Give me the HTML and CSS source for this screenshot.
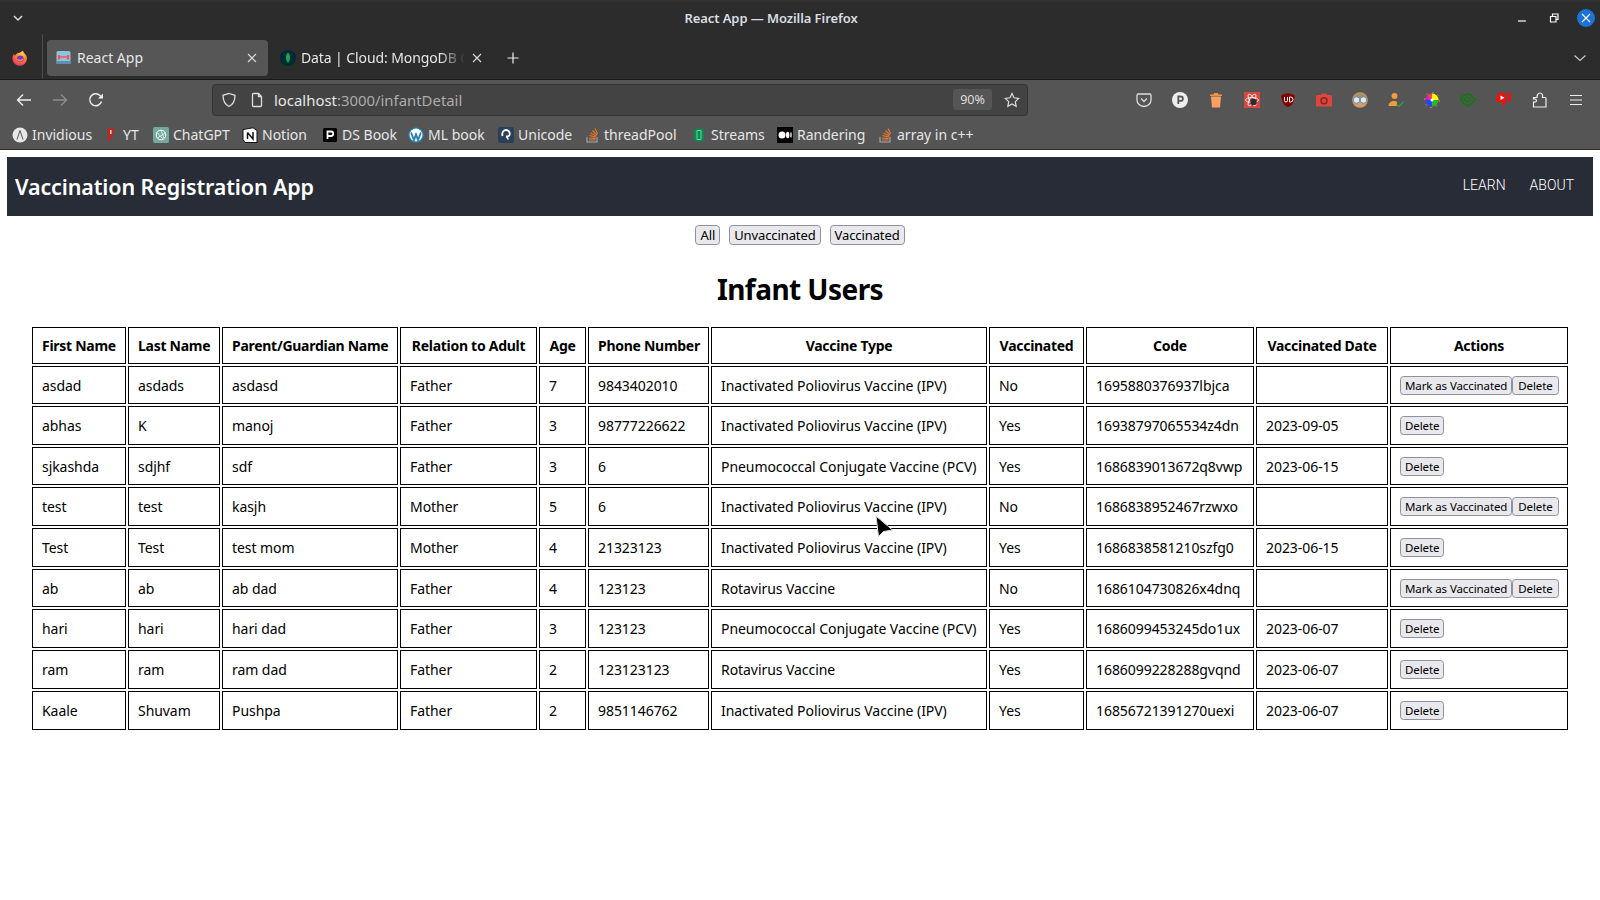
FILE: index.html
```html
<!DOCTYPE html>
<html lang="en">
<head>
<meta charset="utf-8">
<title>React App</title>
<link rel="stylesheet" href="styles.css">
</head>
<body>
<header class="browser">
  <div class="titlebar">
    <svg class="ic14 tb-chev" viewBox="0 0 14 14"><path d="M3 5l4 4 4-4" fill="none" stroke="#ddd" stroke-width="1.5"/></svg>
    <div class="wintitle">React App — Mozilla Firefox</div>
    <div class="winbtns">
      <svg class="ic14" viewBox="0 0 14 14"><path d="M3 10h8" stroke="#fff" stroke-width="1.2"/></svg>
      <svg class="ic14" viewBox="0 0 14 14"><path d="M3.5 5.5h5.5v5.5h-5.500zM5.500 5.500v-2.500h5.500v5.500h-2" fill="none" stroke="#fff" stroke-width="1.200"/></svg>
      <span class="closebtn"><svg class="ic14" viewBox="0 0 14 14"><path d="M3 3l8 8M11 3l-8 8" stroke="#fff" stroke-width="1.100"/></svg></span>
    </div>
  </div>
  <div class="tabbar">
    <div class="ffslot">
      <svg class="ic16" viewBox="0 0 16 16"><defs><radialGradient id="ffg" cx=".65" cy=".2" r=".95"><stop offset="0" stop-color="#ffd43a"/><stop offset=".5" stop-color="#ff7139"/><stop offset="1" stop-color="#e3246e"/></radialGradient></defs><path d="M10.500.5c1 1.300 1.500 2 1.800 2.800 1.500 1 2.700 3 2.700 5.200a7.300 7.300 0 0 1-14.600 0c0-2 .8-3.600 1.800-4.800 0 1 .3 1.500.8 2 .6-2.200 3-2.500 4.500-3 1.500-.5 2.500-1.200 3-2.200z" fill="url(#ffg)"/><circle cx="8.300" cy="8.700" r="3.300" fill="#6a3cc8"/><path d="M5 8.500c1 1 2.500 1.500 4 1 1-.3 2-.8 2.500-1.800 0 2-1.500 3.800-3.300 3.800S5 10.300 5 8.500z" fill="#ff8a3c"/></svg>
    </div>
    <div class="tab tab-active">
      <svg class="ic15" viewBox="0 0 15 15"><rect x=".5" y="1" width="14" height="13" rx="1.500" fill="#8fc4dd"/><rect x=".5" y="11" width="14" height="3" fill="#5e8fb0"/><path d="M3 5v4.500M12 5v4.500" stroke="#f4545c" stroke-width="2.200"/><path d="M3 7h9" stroke="#f4545c" stroke-width="1.500"/></svg>
      <span class="tabtext">React App</span>
      <svg class="ic14 tabx" viewBox="0 0 14 14"><path d="M3 3l8 8M11 3l-8 8" stroke="#ddd" stroke-width="1.100"/></svg>
    </div>
    <div class="tab tab-other">
      <svg class="ic16" viewBox="0 0 16 16"><circle cx="8" cy="8" r="8" fill="#002a36"/><path d="M8 2.500c2.500 2.500 3 6.500 0 10.500c-3-4-2.500-8 0-10.500z" fill="#13aa52"/></svg>
      <span class="tabtext tabfade">Data | Cloud: MongoDB C</span>
      <svg class="ic14 tabx" viewBox="0 0 14 14"><path d="M3 3l8 8M11 3l-8 8" stroke="#ddd" stroke-width="1.100"/></svg>
    </div>
    <svg class="ic14 newtab" viewBox="0 0 14 14"><path d="M7 1.500v11M1.500 7h11" stroke="#eee" stroke-width="1.200"/></svg>
    <svg class="ic14 tabs-chev" viewBox="0 0 14 14"><path d="M1.500 4.500l5.500 5 5.500-5" fill="none" stroke="#ccc" stroke-width="1.200"/></svg>
  </div>
  <div class="navbar-b">
    <div class="navbtns">
      <svg class="ic16" viewBox="0 0 16 16"><path d="M15 8H1.500M7 2.500L1.500 8 7 13.500" fill="none" stroke="#eee" stroke-width="1.300"/></svg>
      <svg class="ic16" viewBox="0 0 16 16"><path d="M1 8h13.500M9 2.500L14.500 8 9 13.500" fill="none" stroke="#8e8e8e" stroke-width="1.300"/></svg>
      <svg class="ic16" viewBox="0 0 16 16"><path d="M13.500 9.500A6 6 0 1 1 12 3.500L14.500 6" fill="none" stroke="#eee" stroke-width="1.400"/><path d="M15 1.500V6.500H10z" fill="#eee"/></svg>
    </div>
    <div class="urlbar">
      <svg class="ic16" viewBox="0 0 16 16"><path d="M8 1.500l6 1.800c0 5-1.500 9-6 11.200C3.500 12.300 2 8.300 2 3.300z" fill="none" stroke="#ddd" stroke-width="1.300"/></svg>
      <svg class="ic16 docicon" viewBox="0 0 16 16"><path d="M3.500 2.500a1 1 0 0 1 1-1h5l3 3v9a1 1 0 0 1-1 1h-7a1 1 0 0 1-1-1zM9.500 1.500v3h3" fill="none" stroke="#ddd" stroke-width="1.300"/></svg>
      <span class="urltext"><span class="urlhost">localhost</span>:3000/infantDetail</span>
      <span class="zoompill">90%</span>
      <svg class="ic16 staricon" viewBox="0 0 16 16"><path d="M8 1.500l2 4.300 4.700.6-3.400 3.200.9 4.700L8 12l-4.200 2.300.9-4.700L1.300 6.400 6 5.800z" fill="none" stroke="#ddd" stroke-width="1.200"/></svg>
    </div>
    <div class="exts">
      <svg class="ic16" viewBox="0 0 16 16"><path d="M2.500 2h11a1.500 1.500 0 0 1 1.500 1.500V8A7 6.500 0 0 1 1 8V3.500A1.500 1.500 0 0 1 2.500 2z" fill="none" stroke="#ddd" stroke-width="1.300"/><path d="M5 6.500l3 3 3-3" fill="none" stroke="#ddd" stroke-width="1.300"/></svg>
      <svg class="ic16" viewBox="0 0 16 16"><circle cx="8" cy="8" r="8" fill="#eee"/><path d="M6.300 12V4.500h2.400a2.200 2.200 0 0 1 0 4.400H6.300" fill="none" stroke="#555" stroke-width="1.800"/></svg>
      <svg class="ic16" viewBox="0 0 16 16"><path d="M6 1h4l.5 1.500H14V4H2V2.500h3.500z" fill="#f58d4c"/><path d="M3 4.500h10L12 15.500H4z" fill="#ff9e5e"/></svg>
      <svg class="ic16" viewBox="0 0 16 16"><rect width="16" height="16" fill="#d7473d"/><ellipse cx="8" cy="8" rx="6.500" ry="2.500" fill="none" stroke="#fff" stroke-width=".8" transform="rotate(60 8 8)"/><ellipse cx="8" cy="8" rx="6.500" ry="2.500" fill="none" stroke="#fff" stroke-width=".8" transform="rotate(-60 8 8)"/><ellipse cx="8" cy="8" rx="6.500" ry="2.500" fill="none" stroke="#fff" stroke-width=".8"/><circle cx="9.500" cy="10" r="3.200" fill="#2b2b2b"/></svg>
      <svg class="ic16" viewBox="0 0 16 16"><path d="M8 .8l7 2c0 6-1.500 10.500-7 12.700C2.500 13.300 1 8.800 1 2.800z" fill="#800000" stroke="#666" stroke-width=".5"/><path d="M4.500 5v3.500a1.500 1.500 0 0 0 3 0V5M9.500 5v5h1a2.500 2.500 0 0 0 0-5z" fill="none" stroke="#fff" stroke-width="1"/></svg>
      <svg class="ic16" viewBox="0 0 16 16"><path d="M1.500 3H5l1-1.500h4L11 3h3.500A1.500 1.500 0 0 1 16 4.500v10H0v-10A1.500 1.500 0 0 1 1.500 3z" fill="#e0443a"/><circle cx="8" cy="8.800" r="3" fill="none" stroke="#7c2a24" stroke-width="1.500"/></svg>
      <svg class="ic16" viewBox="0 0 16 16"><circle cx="8" cy="8" r="7.800" fill="#d59a72"/><path d="M.8 6.500A7.500 7.500 0 0 1 15.200 6.500z" fill="#a8906a"/><circle cx="4.500" cy="8" r="3.200" fill="#d8eef2" stroke="#5f7f90" stroke-width=".8"/><circle cx="11.500" cy="8" r="3.200" fill="#d8eef2" stroke="#5f7f90" stroke-width=".8"/></svg>
      <svg class="ic16" viewBox="0 0 16 16"><circle cx="6.500" cy="4" r="3" fill="#f79a3a"/><path d="M.500 14c0-3 2.500-5 5.500-5 1.500 0 2.500.5 3 1v4z" fill="#f79a3a"/><path d="M8.500 12l2.500 2.500 4.500-5" fill="none" stroke="#2e9b57" stroke-width="1.200"/></svg>
      <svg class="ic16" viewBox="0 0 16 16"><circle cx="8" cy="8" r="7.700" fill="none" stroke="#999" stroke-dasharray="2 4" stroke-width=".8"/><circle cx="8" cy="8" r="6.500" fill="#f44"/><path d="M8 8V1.500A6.500 6.500 0 0 1 14.500 8z" fill="#ff0"/><path d="M8 8h6.500A6.500 6.500 0 0 1 8 14.500z" fill="#2b2"/><path d="M8 8v6.500A6.500 6.500 0 0 1 1.500 8z" fill="#24f"/><path d="M8 8H1.500A6.500 6.500 0 0 1 3.400 3.400z" fill="#c2c"/><circle cx="8" cy="8" r="1.500" fill="#fff"/></svg>
      <svg class="ic16" viewBox="0 0 16 16"><path d="M.5 7C2.500 3 7 1 10 3c2.500 1.500 4 3.500 5.500 4.500L8.500 14C6 13.500 2.500 11 .5 7z" fill="none" stroke="#0b7d0b" stroke-width="1.500"/><path d="M4 7c2-2.500 5-2 6.500.5L8 10C6.500 9.500 5 8.500 4 7z" fill="none" stroke="#0b7d0b" stroke-width="1.500"/></svg>
      <svg class="ic16" viewBox="0 0 16 16"><path d="M2 1h8.500v8.500L7 15l-1-5H0v-3z" fill="#f01010"/><rect x="12" y="1" width="3" height="8" fill="#f01010"/><path d="M4.500 3.500l4 2.300-4 2.300z" fill="#fff"/></svg>
      <svg class="ic16" viewBox="0 0 16 16"><path d="M1.500 15V10c2 .5 3-.5 3-1.500S3 6.500 1.500 7V5.500H5C5 3 6 1 8 1s3 2 2.500 4.500H13a1 1 0 0 1 1 1V15z" fill="none" stroke="#eee" stroke-width="1.200"/></svg>
      <svg class="ic16" viewBox="0 0 16 16"><path d="M2 3.500h12M2 8h12M2 12.500h12" stroke="#eee" stroke-width="1.200"/></svg>
    </div>
  </div>
  <nav class="bookmarks">
    <a class="bm bm1"><svg class="ic16" viewBox="0 0 16 16"><circle cx="8" cy="8" r="7.500" fill="#e8e8e8"/><path d="M5 12.500L8 3.500l3 9" fill="none" stroke="#555" stroke-width="1"/></svg>Invidious</a>
    <a class="bm bm2"><svg class="ic16" viewBox="0 0 16 16"><path d="M5 1h6l-1.500 9H7.500L7 14H5z" fill="#c6241b"/><path d="M7 3v4h1.500V3z" fill="#f2d6d0"/></svg>YT</a>
    <a class="bm bm3"><svg class="ic16" viewBox="0 0 16 16"><rect width="16" height="16" rx="2" fill="#74aa9c"/><circle cx="8" cy="8" r="4.800" fill="none" stroke="#fff" stroke-width="1"/><path d="M8 3.200L11 11M12.500 6L5 10.500M4 5.500L10 12" stroke="#fff" stroke-width=".7"/></svg>ChatGPT</a>
    <a class="bm bm4"><svg class="ic16" viewBox="0 0 16 16"><path d="M1 2.500L11 .8 15 3.500V15.500H3L1 12.500z" fill="#fff" stroke="#111" stroke-width="1"/><path d="M5.500 12V5.500M5.500 5.500L11 12V5" fill="none" stroke="#111" stroke-width="1.500"/></svg>Notion</a>
    <a class="bm bm5"><svg class="ic16" viewBox="0 0 16 16"><rect x="1" y="1" width="14" height="14" rx="1.500" fill="#000"/><path d="M5.500 12V4.500H9a2 2 0 0 1 0 4.500H5.500" fill="none" stroke="#fff" stroke-width="1.800"/></svg>DS Book</a>
    <a class="bm bm6"><svg class="ic16" viewBox="0 0 16 16"><circle cx="8" cy="8" r="7.700" fill="#1d7cb3"/><circle cx="8" cy="8" r="6.500" fill="#fff"/><path d="M3 5.500L6 13 8 7.500 10 13l3-7.500" fill="none" stroke="#1d7cb3" stroke-width="1.800"/></svg>ML book</a>
    <a class="bm bm7"><svg class="ic16" viewBox="0 0 16 16"><rect width="16" height="16" rx="2" fill="#2a4058"/><path d="M4.500 9c-1-4 1.500-6 3.500-6s4.500 2 3.500 5c-.5 1.200-2 1.500-3.500 1.500M8 9.500c1.500.5 2 1.500 2 3" fill="none" stroke="#fff" stroke-width="1.800"/></svg>Unicode</a>
    <a class="bm bm8"><svg class="ic16" viewBox="0 0 16 16"><path d="M3 10v5h10v-5" fill="none" stroke="#aaa" stroke-width="1.100"/><path d="M5 13h6.500M5 11l6.500.6M5.500 8.500l6.300 1.700M6.500 6l5.800 3M8.500 3.500l4.500 4.500M11 1.500l2.700 5.300" stroke="#e8762c" stroke-width="1.200"/></svg>threadPool</a>
    <a class="bm bm9"><svg class="ic16" viewBox="0 0 16 16"><path d="M8 .5l5 2.500v10l-5 2.500-5-2.500V3z" fill="#0c8a52"/><path d="M6 3.500h4v9H6z" fill="none" stroke="#6fd19c" stroke-width="1"/></svg>Streams</a>
    <a class="bm bm10"><svg class="ic16" viewBox="0 0 16 16"><rect width="16" height="16" fill="#000"/><circle cx="5" cy="8" r="3.500" fill="#fff"/><ellipse cx="10.700" cy="8" rx="1.700" ry="3.300" fill="#fff"/><ellipse cx="14" cy="8" rx=".7" ry="3" fill="#fff"/></svg>Randering</a>
    <a class="bm bm11"><svg class="ic16" viewBox="0 0 16 16"><path d="M3 10v5h10v-5" fill="none" stroke="#aaa" stroke-width="1.100"/><path d="M5 13h6.500M5 11l6.500.6M5.500 8.500l6.300 1.700M6.500 6l5.800 3M8.500 3.500l4.500 4.500M11 1.500l2.700 5.300" stroke="#e8762c" stroke-width="1.200"/></svg>array in c++</a>
  </nav>
</header>
<main class="page">
  <div class="appbar">
    <div class="brand">Vaccination Registration App</div>
    <div class="applinks"><a>LEARN</a><a>ABOUT</a></div>
  </div>
  <div class="filters"><button>All</button><button>Unvaccinated</button><button>Vaccinated</button></div>
  <h1>Infant Users</h1>
  <table>
    <colgroup><col class="c1"><col class="c2"><col class="c3"><col class="c4"><col class="c5"><col class="c6"><col class="c7"><col class="c8"><col class="c9"><col class="c10"><col class="c11"></colgroup>
    <thead><tr><th>First Name</th><th>Last Name</th><th>Parent/Guardian Name</th><th>Relation to Adult</th><th>Age</th><th>Phone Number</th><th>Vaccine Type</th><th>Vaccinated</th><th>Code</th><th>Vaccinated Date</th><th>Actions</th></tr></thead>
    <tbody>
      <tr class="first"><td>asdad</td><td>asdads</td><td>asdasd</td><td>Father</td><td>7</td><td>9843402010</td><td>Inactivated Poliovirus Vaccine (IPV)</td><td>No</td><td>1695880376937lbjca</td><td></td><td><button>Mark as Vaccinated</button><button>Delete</button></td></tr>
      <tr><td>abhas</td><td>K</td><td>manoj</td><td>Father</td><td>3</td><td>98777226622</td><td>Inactivated Poliovirus Vaccine (IPV)</td><td>Yes</td><td>16938797065534z4dn</td><td>2023-09-05</td><td><button>Delete</button></td></tr>
      <tr><td>sjkashda</td><td>sdjhf</td><td>sdf</td><td>Father</td><td>3</td><td>6</td><td>Pneumococcal Conjugate Vaccine (PCV)</td><td>Yes</td><td>1686839013672q8vwp</td><td>2023-06-15</td><td><button>Delete</button></td></tr>
      <tr><td>test</td><td>test</td><td>kasjh</td><td>Mother</td><td>5</td><td>6</td><td>Inactivated Poliovirus Vaccine (IPV)</td><td>No</td><td>1686838952467rzwxo</td><td></td><td><button>Mark as Vaccinated</button><button>Delete</button></td></tr>
      <tr><td>Test</td><td>Test</td><td>test mom</td><td>Mother</td><td>4</td><td>21323123</td><td>Inactivated Poliovirus Vaccine (IPV)</td><td>Yes</td><td>1686838581210szfg0</td><td>2023-06-15</td><td><button>Delete</button></td></tr>
      <tr><td>ab</td><td>ab</td><td>ab dad</td><td>Father</td><td>4</td><td>123123</td><td>Rotavirus Vaccine</td><td>No</td><td>1686104730826x4dnq</td><td></td><td><button>Mark as Vaccinated</button><button>Delete</button></td></tr>
      <tr><td>hari</td><td>hari</td><td>hari dad</td><td>Father</td><td>3</td><td>123123</td><td>Pneumococcal Conjugate Vaccine (PCV)</td><td>Yes</td><td>1686099453245do1ux</td><td>2023-06-07</td><td><button>Delete</button></td></tr>
      <tr><td>ram</td><td>ram</td><td>ram dad</td><td>Father</td><td>2</td><td>123123123</td><td>Rotavirus Vaccine</td><td>Yes</td><td>1686099228288gvqnd</td><td>2023-06-07</td><td><button>Delete</button></td></tr>
      <tr><td>Kaale</td><td>Shuvam</td><td>Pushpa</td><td>Father</td><td>2</td><td>9851146762</td><td>Inactivated Poliovirus Vaccine (IPV)</td><td>Yes</td><td>16856721391270uexi</td><td>2023-06-07</td><td><button>Delete</button></td></tr>
    </tbody>
  </table>
</main>
<svg class="cursor" viewBox="0 0 19 23"><path d="M1 1L3.500 21.500 8.500 16.500 17.500 15z" fill="#000" stroke="#ddd" stroke-width="1" stroke-linejoin="round"/></svg>
</body>
</html>
```

FILE: styles.css
```css
* { box-sizing: border-box; }
html, body { margin: 0; padding: 0; }
body {
  width: 1600px;
  height: 900px;
  overflow: hidden;
  background: #fff;
  color: #000;
  font-family: "Noto Sans", "Open Sans", sans-serif;
  position: relative;
}
svg { display: block; flex: none; }
.ic14 { width: 14px; height: 14px; }
.ic15 { width: 15px; height: 15px; }
.ic16 { width: 16px; height: 16px; }

/* browser chrome */
.browser { height: 150px; background: #2c2c2c; display: flex; flex-direction: column; color: #eee; }
.titlebar { height: 40px; display: flex; align-items: center; padding: 0 5px 4px 11px; background: linear-gradient(#333 0, #2c2c2c 3px); }
.wintitle { position: absolute; left: 0; width: 1542px; text-align: center; font-size: 13px; font-weight: 600; color: #d8dde2; letter-spacing: -.08px; }
.winbtns { margin-left: auto; display: flex; align-items: center; gap: 18px; }
.closebtn { width: 18px; height: 18px; margin-left: -2px; border-radius: 50%; background: #1a73d9; display: flex; align-items: center; justify-content: center; }
.tabbar { height: 40px; display: flex; align-items: center; border-bottom: 1px solid #1a1a1a; padding-bottom: 4px; position: relative; }
.ffslot { width: 43px; height: 44px; padding: 16px 0 0 12px; border-right: 1px solid #4d4d4d; margin-top: -4px; }
.tab { height: 36px; display: flex; align-items: center; border-radius: 4px; }
.tab-active { width: 221px; margin-left: 4px; background: #565656; padding: 0 9px 0 9px; }
.tab-other { width: 221px; margin-left: 4px; padding: 0 0 0 8px; }
.tabtext { margin-left: 6px; font-size: 14px; color: #e6e6e6; white-space: nowrap; }
.tabfade { width: 169px; margin-left: 5px; letter-spacing: -.1px; -webkit-mask-image: linear-gradient(to right, #000 82%, transparent 97%); mask-image: linear-gradient(to right, #000 82%, transparent 97%); }
.tabx { margin-left: auto; }
.tab-other .tabx { margin-left: 0; }
.newtab { margin-left: 13px; }
.tabs-chev { margin-left: auto; margin-right: 13px; }
.navbar-b { height: 38px; background: #555; display: flex; align-items: center; padding-top: 1px; }
.navbtns { width: 212px; display: flex; gap: 20px; padding-left: 16px; }
.urlbar { width: 816px; height: 32px; background: #434343; border: 1px solid #333; border-radius: 4px; display: flex; align-items: center; padding: 0 7px 0 8px; }
.docicon { margin-left: 12px; }
.urltext { margin-left: 9px; font-size: 14.900px; color: #acacac; }
.urlhost { color: #e6e6e6; }
.zoompill { margin-left: auto; width: 39px; height: 21px; background: #555; border-radius: 3px; font-size: 12.5px; color: #ddd; display: flex; align-items: center; justify-content: center; }
.staricon { margin-left: 12px; }
.exts { display: flex; gap: 20px; margin-left: 108px; }
.bookmarks { height: 32px; flex: none; background: #555; display: flex; align-items: center; padding: 2px 0 0 12px; border-bottom: 1px solid #2b2b2b; }
.bm { display: flex; align-items: center; gap: 4px; font-size: 14px; color: #e6e6e6; white-space: nowrap; }
.bm1 { width: 91px; } .bm2 { width: 50px; } .bm3 { width: 89px; } .bm4 { width: 80px; }
.bm5 { width: 86px; } .bm6 { width: 90px; } .bm7 { width: 86px; } .bm8 { width: 107px; }
.bm9 { width: 86px; } .bm10 { width: 100px; } .bm11 { width: 110px; }

/* app */
.page { padding: 7px 7px 0; }
.appbar { height: 59px; background: #282c37; color: #fff; display: flex; align-items: center; justify-content: space-between; padding: 0 19px 0 8px; }
.brand { font-size: 21.500px; font-weight: 600; letter-spacing: -.13px; }
.applinks { display: flex; gap: 24px; font-family: Roboto, sans-serif; font-size: 14px; font-weight: 300; padding-bottom: 3px; }
.filters { display: flex; justify-content: center; gap: 9px; margin-top: 9px; }
button {
  font-family: inherit;
  height: 20px;
  padding: 0 4px;
  border: 1px solid #8f8f9d;
  border-radius: 3.600px;
  background: #e9e9ed;
  color: #000;
  font-size: 13px;
  letter-spacing: -.1px;
  display: inline-flex;
  align-items: center;
}
h1 { margin: 24px 0 16px; height: 40px; line-height: 40px; text-align: center; font-size: 28px; font-weight: 700; letter-spacing: -.55px; }
table { width: 1540px; margin: 0 auto; table-layout: fixed; border-collapse: separate; border-spacing: 2px; font-size: 14px; letter-spacing: -.06px; }
.c1 { width: 94px; } .c2 { width: 92px; } .c3 { width: 176px; } .c4 { width: 137px; }
.c5 { width: 47px; } .c6 { width: 121px; } .c7 { width: 276px; } .c8 { width: 95px; }
.c9 { width: 168px; } .c10 { width: 132px; } .c11 { width: 178px; }
th, td { border: 1px solid #000; padding: 0 9px; white-space: nowrap; height: 38.700px; }
th { height: 37px; font-weight: 700; letter-spacing: -.28px; }
.first td { height: 38px; }
td button { font-size: 11.500px; height: 19px; vertical-align: top; }
td button:last-child { padding: 0 5px; }
td button:only-child { padding: 0 4px; }

.cursor { position: absolute; left: 875px; top: 515px; width: 19px; height: 23px; }
```
